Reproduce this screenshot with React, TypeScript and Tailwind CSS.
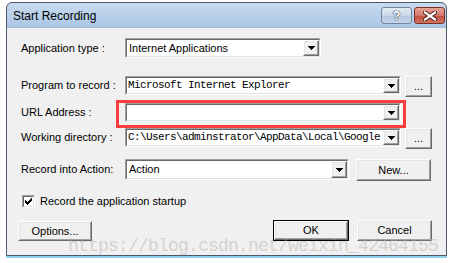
import React from 'react'

const sans = "font-['Liberation_Sans',Arial,sans-serif]"
const raisedOuter = 'border border-t-white border-l-white border-b-[#696969] border-r-[#696969]'
const raisedInner = 'border border-t-[#e3e3e3] border-l-[#e3e3e3] border-b-[#a0a0a0] border-r-[#a0a0a0] bg-[#f0f0f0]'

function Arrow() {
  return (
    <div className={`${raisedOuter} h-full w-[16px] shrink-0`}>
      <div className={`${raisedInner} h-full flex items-center justify-center`}>
        <svg width="7" height="4" viewBox="0 0 7 4" shapeRendering="crispEdges">
          <path d="M0 0h7v1h-1v1h-1v1h-1v1h-1v-1h-1v-1h-1v-1h-1z" fill="#000" />
        </svg>
      </div>
    </div>
  )
}

function Combo({ className, text, mono }: { className: string; text?: string; mono?: boolean }) {
  return (
    <div className={`border border-t-[#a0a0a0] border-l-[#a0a0a0] border-b-white border-r-white shrink-0 ${className}`}>
      <div className="h-full flex border border-t-[#696969] border-l-[#696969] border-b-[#e3e3e3] border-r-[#e3e3e3] bg-white">
        <div
          className={
            mono
              ? "flex-1 min-w-0 overflow-hidden whitespace-nowrap pl-[1px] flex items-center font-['Liberation_Mono',monospace] text-[11px] tracking-[-0.6px] text-black"
              : 'flex-1 min-w-0 overflow-hidden whitespace-nowrap pl-[2px] flex items-center text-[11px] text-black'
          }
        >
          {text}
        </div>
        <Arrow />
      </div>
    </div>
  )
}

function Button({ className, label, isDefault }: { className: string; label: string; isDefault?: boolean }) {
  return (
    <div className={`shrink-0 ${isDefault ? 'border border-black' : ''} ${className}`}>
      <div className={`${raisedOuter} h-full`}>
        <div className={`${raisedInner} h-full flex items-center justify-center text-[11px] text-black`}>{label}</div>
      </div>
    </div>
  )
}

function Label({ children }: { children: React.ReactNode }) {
  return <div className="w-[104px] shrink-0 text-[11px] text-black whitespace-nowrap">{children}</div>
}

export default function App() {
  return (
    <div className={`relative w-[451px] h-[263px] bg-white overflow-hidden ${sans}`}>
      {/* window */}
      <div className="ml-[6px] mt-[2px] w-[441px] h-[254px] flex flex-col border border-[#4b5868] rounded-t-[6px] bg-[linear-gradient(to_bottom,#c9dbef,#a9c5e6_25px)]">
        {/* title bar */}
        <div className="h-[24px] shrink-0 flex items-start">
          <div className="pl-[6px] pt-[6px] text-[12px] leading-[14px] text-black flex-1">Start Recording</div>
          <div className="mt-[4px] w-[31px] h-[17px] rounded-[3px] border border-[#71849d] bg-[linear-gradient(to_bottom,#e4ecf5,#c9d7e8_50%,#b3c6dc_51%,#c4d5e9)] flex items-center justify-center">
            <span className="text-[13px] font-bold leading-none text-white [text-shadow:0_0_1px_#2c3e55,0_0_1px_#2c3e55,0_0_1px_#2c3e55]">?</span>
          </div>
          <div className="mt-[4px] ml-[2px] mr-[1px] w-[31px] h-[17px] rounded-[3px] border border-[#7a3128] bg-[linear-gradient(to_bottom,#e6a597,#d3776a_50%,#c0503f_51%,#d2705f)] flex items-center justify-center">
            <svg width="14" height="10" viewBox="0 0 14 10">
              <path d="M2 1.5L12 8.5M12 1.5L2 8.5" stroke="#3a1410" strokeWidth="4" strokeLinecap="square" />
              <path d="M2 1.5L12 8.5M12 1.5L2 8.5" stroke="#fff" strokeWidth="2.2" strokeLinecap="square" />
            </svg>
          </div>
        </div>

        {/* client */}
        <div className="flex-1 bg-[#f0f0f0] border-t border-[#a9bdd4] flex flex-col">
          <div className="pl-[14px] mt-[10px] h-[20px] flex items-center">
            <Label>Application type :</Label>
            <Combo className="w-[196px] h-[20px]" text="Internet Applications" />
          </div>

          <div className="pl-[14px] mt-[18px] h-[21px] flex items-start">
            <div className="h-[19px] flex items-center">
              <Label>Program to record :</Label>
            </div>
            <Combo className="w-[276px] h-[19px]" text="Microsoft Internet Explorer" mono />
            <Button className="ml-[4px] w-[27px] h-[21px]" label="..." />
          </div>

          <div className="pl-[14px] mt-[6px] h-[19px] flex items-center">
            <Label>URL Address :</Label>
            <Combo className="w-[276px] h-[19px]" text="" />
          </div>

          <div className="pl-[14px] mt-[6px] h-[21px] flex items-start">
            <div className="h-[19px] flex items-center">
              <Label>Working directory :</Label>
            </div>
            <Combo className="w-[276px] h-[19px]" text="C:\Users\adminstrator\AppData\Local\Google" mono />
            <Button className="ml-[4px] w-[27px] h-[21px]" label="..." />
          </div>

          <div className="pl-[14px] mt-[10px] h-[22px] flex items-start">
            <div className="h-[21px] flex items-center">
              <Label>Record into Action:</Label>
            </div>
            <Combo className="w-[224px] h-[21px]" text="Action" />
            <Button className="ml-[7px] w-[75px] h-[22px]" label="New..." />
          </div>

          <div className="pl-[15px] mt-[14px] h-[13px] flex items-center">
            <div className="w-[13px] h-[13px] border border-t-[#a0a0a0] border-l-[#a0a0a0] border-b-white border-r-white">
              <div className="h-full border border-t-[#696969] border-l-[#696969] border-b-[#e3e3e3] border-r-[#e3e3e3] bg-white flex items-center justify-center">
                <svg width="7" height="7" viewBox="0 0 7 7" shapeRendering="crispEdges">
                  <path d="M0 2h1v1h1v1h1v-1h1v-1h1v-1h1v-1h1v3h-1v1h-1v1h-1v1h-1v1h-1v-1h-1v-1h-1z" fill="#000" />
                </svg>
              </div>
            </div>
            <span className="ml-[5px] text-[11px] text-black">Record the application startup</span>
          </div>

          <div className="pl-[11px] mt-[12px] h-[21px] flex items-start">
            <Button className="w-[74px] h-[20px] mt-[1px]" label="Options..." />
            <div className="flex-1" />
            <Button className="w-[76px] h-[21px]" label="OK" isDefault />
            <Button className="ml-[8px] mr-[14px] w-[75px] h-[21px]" label="Cancel" />
          </div>
        </div>
      </div>
      <div className="ml-[6px] w-[441px] h-[2px] bg-[#8fd0ee]" />

      {/* red highlight annotation */}
      <div className="absolute left-[116px] top-[100px] w-[290px] h-[28px] border-[3px] border-[#fb3c3c] pointer-events-none" />

      {/* watermark */}
      <div className="absolute left-[68px] top-[236px] font-['Liberation_Mono',monospace] text-[18px] leading-[20px] tracking-[-0.8px] text-[#b4b4b4]/50 whitespace-nowrap pointer-events-none">
        https://blog.csdn.net/weixin_42464155
      </div>
    </div>
  )
}
